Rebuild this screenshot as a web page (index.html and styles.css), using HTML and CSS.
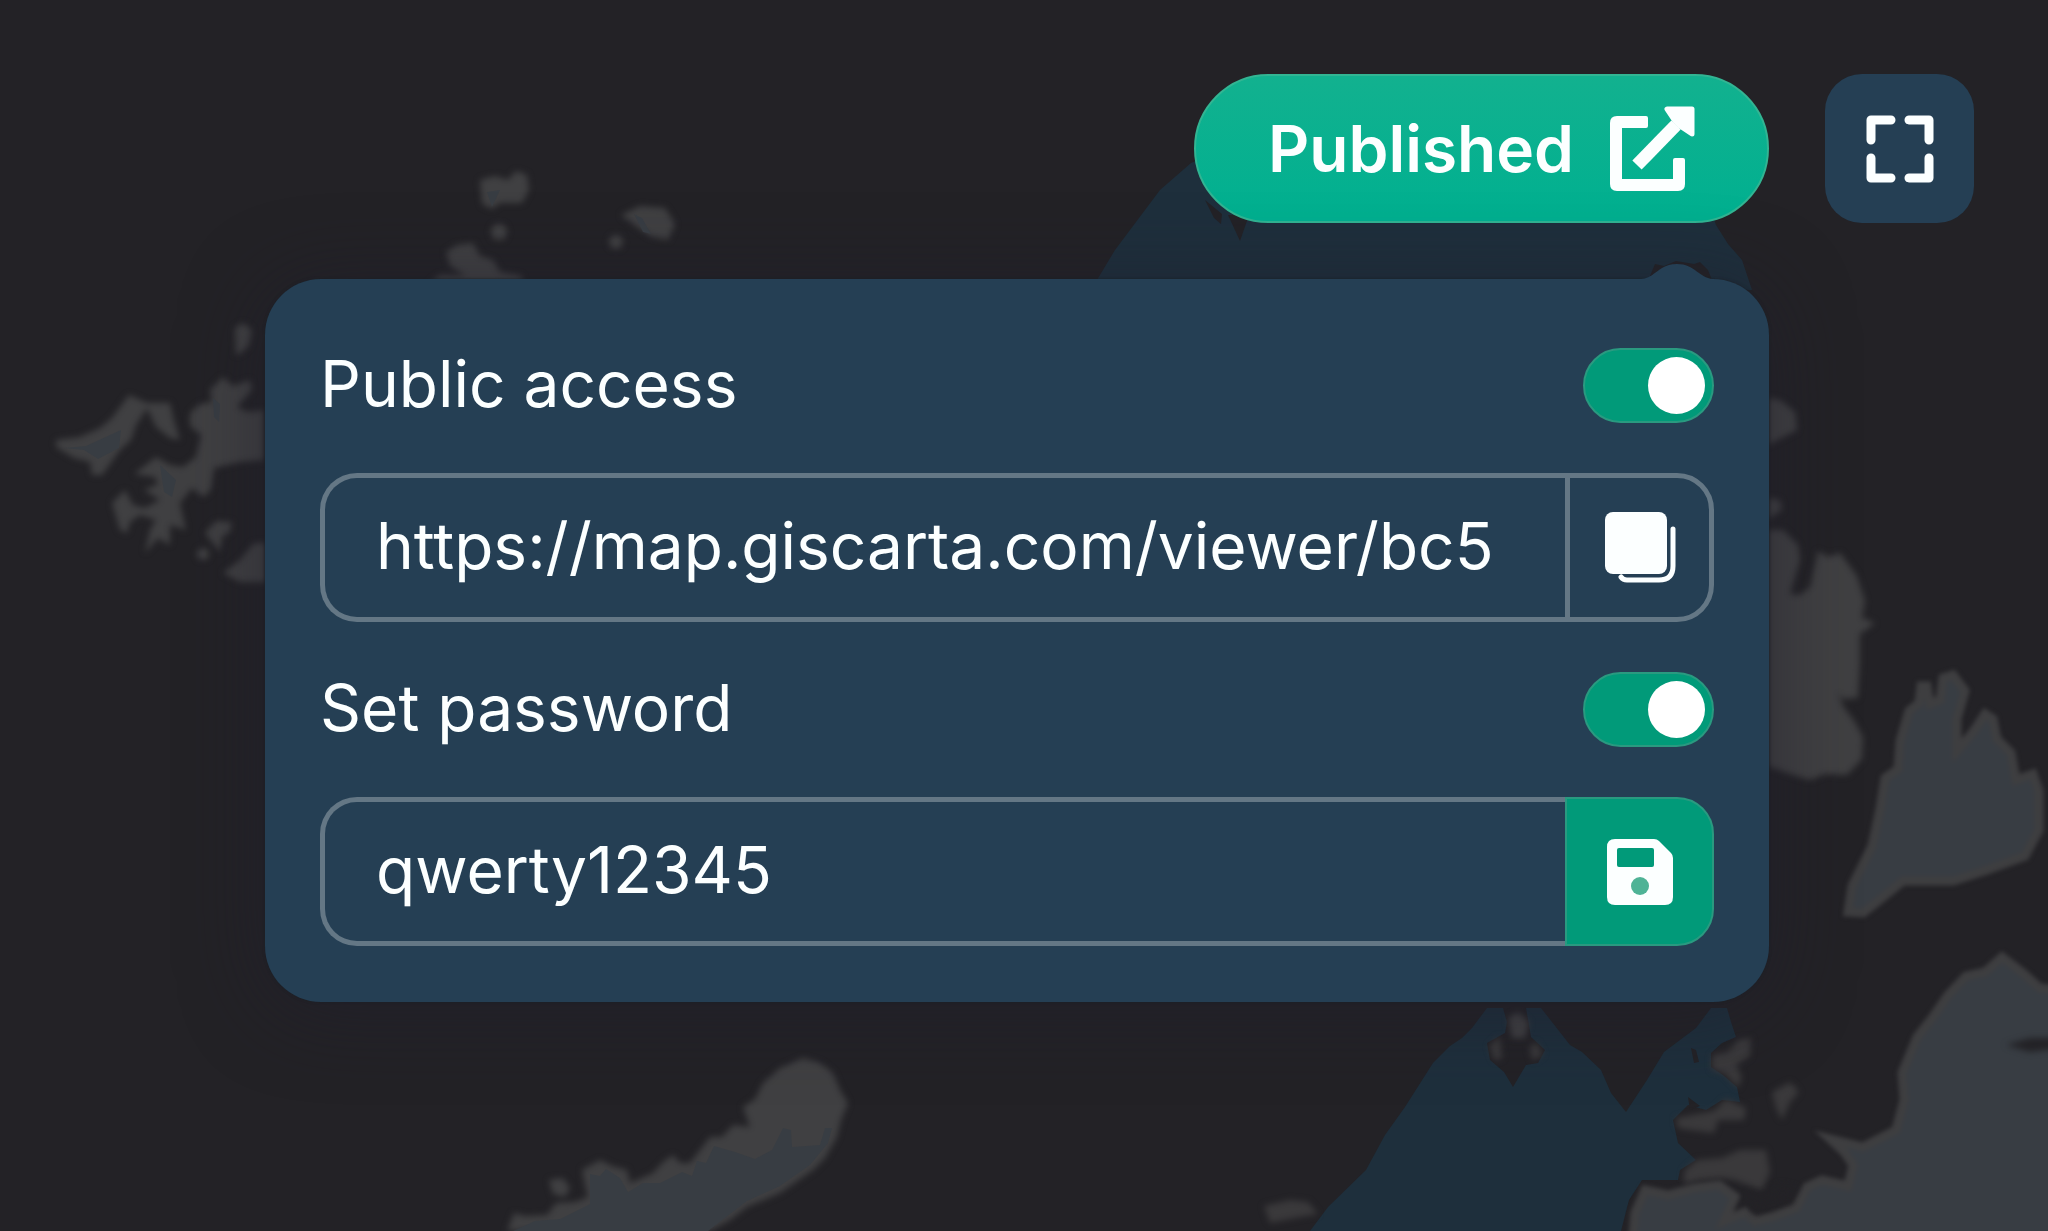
FILE: index.html
```html
<!DOCTYPE html>
<html lang="en">
<head>
  <meta charset="UTF-8">
  <meta name="viewport" content="width=device-width, initial-scale=1.0">
  <title>Map sharing</title>
  <link rel="stylesheet" href="styles.css">
</head>
<body>
  <svg class="map" viewBox="0 0 2048 1231" preserveAspectRatio="xMidYMid slice" aria-hidden="true">
    <!-- water -->
    <g class="water">
      <path d="M1097 280L1115 250L1136 222L1160 190L1191 163L1220 150H1690L1716 225L1728 244L1742 260L1752 290Z"/>
      <path d="M1310 1231L1328 1207L1366 1170L1385 1135L1405 1107L1433 1063L1450 1046L1462 1038L1472 1028L1487 1008H1503L1507 1022L1505 1033L1487 1043L1490 1060L1504 1072L1513 1087L1526 1065L1538 1063L1545 1050L1531 1037L1526 1008H1541L1570 1045L1582 1052L1601 1070L1611 1093L1626 1112L1647 1080L1664 1052L1680 1040L1696 1028L1711 1008H1727L1731 1022L1736 1037L1722 1043L1711 1053V1067L1723 1075L1737 1087L1740 1102L1722 1100L1706 1110L1688 1105L1673 1120L1678 1143L1696 1160L1680 1170L1678 1180H1642L1629 1200L1621 1231Z"/>
    </g>
    <path class="dark" d="M1228 215H1249L1240 241Z M1205 200L1222 214L1221 224L1214 218Z M1688 1097L1700 1106L1690 1110Z M1691 1048L1696 1050L1699 1062L1694 1063Z M1650 276L1655 264L1664 266L1676 261L1694 264L1700 262L1708 270L1712 280Z"/>
    <!-- land -->
    <g class="land">
      <path d="M480 180L495 176L508 180L516 171L527 175L529 190L522 203L500 203L492 209L482 204Z"/>
      <path d="M621 215L640 206L665 208L675 224L668 240L650 236L636 226Z"/>
      <circle cx="616" cy="242" r="7"/>
      <circle cx="499" cy="232" r="8"/>
      <path d="M446 252L457 245L473 243L480 256L493 260L500 272L522 276V285H428L440 275L466 276L450 266Z"/>
      <path d="M235 328L243 323L252 330L249 345L241 353L236 355Z"/>
      <path d="M56 440L80 437L100 428L112 418L129 395L147 403L170 403L174 420L180 440L170 438L156 427L147 408L136 425L131 440L120 450L102 475L92 475L90 462L74 458L56 447Z"/>
      <path d="M190 413L200 404L212 402L210 390L223 377L233 386L250 380L252 390L237 407L248 412L264 410V460L240 462L214 468L211 490L203 497L192 488L180 503L186 530L170 525L170 545L158 538L145 553L150 530L156 520L140 515L130 522L127 533L120 530L112 503L125 490L133 505L145 508L160 500L144 490L158 484L155 477L134 474L142 468L156 457L170 465L183 467L196 457L201 435L190 426Z"/>
      <path d="M205 533L216 521L232 522L230 532L222 537L220 552Z"/>
      <circle cx="203" cy="554" r="6"/>
      <path d="M223 573L240 560L254 543H266V582H240Z"/>
      <path d="M1768 398L1780 400L1795 412L1797 430L1783 437L1768 445Z M1768 498L1780 500L1782 510L1768 519Z"/>
      <path d="M1768 530H1783L1798 545L1800 560L1790 594L1800 595L1810 587L1818 551L1828 557L1840 553L1857 576L1865 601L1862 618L1875 623L1860 634L1860 664L1858 698L1843 699L1838 692L1843 706L1855 722L1863 737L1862 759L1847 775L1825 774L1810 780L1790 774L1768 766Z"/>
      <path d="M507 1231L514 1213L525 1216L547 1215L556 1203L575 1202L588 1197L585 1185L582 1170L600 1160L612 1166L627 1170L630 1183L653 1173L663 1162L673 1155L680 1163L690 1163L700 1150L710 1137L722 1137L733 1125L750 1127L743 1107L755 1099L763 1083L780 1068L803 1058L820 1063L833 1073L840 1090L848 1103L841 1120L837 1137L825 1158L813 1170L780 1193L747 1207L730 1220L710 1231Z"/>
      <path d="M549 1180L563 1178L570 1188L565 1197L553 1194Z"/>
      <path d="M1508 1018L1518 1012L1529 1022L1525 1038L1512 1038Z"/>
      <path class="faint" d="M1489 1046L1500 1036L1502 1058L1495 1061Z M1529 1048L1536 1042L1543 1054L1533 1061Z M1712 1055L1728 1052L1738 1040L1751 1038L1750 1056L1736 1065L1742 1077L1738 1088L1724 1073L1712 1070Z M1676 1118L1692 1115L1714 1111L1726 1099L1746 1108L1744 1120L1718 1120L1714 1133L1690 1130L1678 1128Z M1772 1092L1790 1082L1799 1092L1790 1102L1782 1120L1776 1108Z M1684 1171L1697 1160L1722 1158L1740 1150L1766 1150L1770 1172L1762 1190L1745 1184L1735 1180L1722 1178L1700 1180L1684 1184Z M1264 1206L1290 1200L1308 1202L1318 1214L1300 1217L1270 1223Z"/>
    </g>
    <g class="shore">
      <path d="M1848 912L1852 886L1872 846L1880 809L1885 778L1898 769L1900 741L1909 711L1919 703L1921 686L1927 686L1930 704L1940 700L1943 678L1953 675L1965 691L1957 719L1957 751L1973 732L1985 714L1993 719L1997 739L2011 753L2016 780L2033 774L2039 791L2039 830L2025 856L1987 870L1953 881L1903 881L1877 902L1863 913Z"/>
      <path d="M2060 990L2040 988L2023 973L2002 957L1985 972L1966 976L1948 995L1932 1018L1917 1037L1902 1073L1904 1100L1896 1130L1863 1147L1830 1139L1844 1152L1853 1165L1848 1186L1822 1180L1807 1187L1796 1208L1775 1216L1755 1221L1745 1212L1724 1221L1735 1197L1719 1185L1695 1188L1668 1195L1645 1190L1635 1213L1632 1245H2060Z"/>
    </g>
    <path class="shallow" d="M513 1231L535 1221L560 1219L590 1204L590 1174L600 1176L606 1169L620 1178L628 1192L643 1183L660 1183L682 1172L692 1176L697 1161L706 1163L714 1146L735 1152L755 1159L772 1150L783 1128L791 1130L792 1147L820 1145L825 1128H832L828 1143L810 1165L780 1186L747 1201L708 1231Z M65 448L86 446L121 430L119 448L98 459L84 450Z M160 465L176 480L172 497L164 492Z M213 398L220 404L219 422L214 417Z M487 192L500 190L492 207Z M634 214L642 218L651 234L643 232Z"/>
    <path class="dark-soft" d="M2006 1045L2030 1038H2060V1048L2030 1052Z M1748 1192L1762 1196L1780 1184L1797 1188L1788 1202L1770 1198L1752 1214Z"/>
  </svg>

  <main class="page">
    <div class="toolbar">
      <button class="publish" type="button">
        Published
        <svg class="publish-icon" viewBox="0 0 85 85" aria-hidden="true">
          <path d="M36 10Q38 10 38 12V20Q38 22 36 22H12V73H63V54Q63 52 65 52H73Q75 52 75 54V78Q75 85 68 85H7Q0 85 0 78V17Q0 10 7 10Z" fill="currentColor"/>
          <path d="M27 59L66 19" fill="none" stroke="currentColor" stroke-width="13"/>
          <path d="M57 3H82V28L70 20L65 15Z" fill="currentColor" stroke="currentColor" stroke-width="5" stroke-linejoin="round"/>
        </svg>
      </button>
      <button class="fullscreen" type="button" aria-label="Full screen">
        <svg class="fullscreen-icon" viewBox="0 0 70 70" aria-hidden="true">
          <path d="M6 26V6H26M44 6H64V26M64 44V64H44M26 64H6V44" fill="none" stroke="currentColor" stroke-width="9" stroke-linejoin="round" stroke-linecap="round"/>
        </svg>
      </button>
    </div>

    <section class="panel">
      <svg class="panel-tip" viewBox="0 0 72 16" aria-hidden="true">
        <path d="M0 16C14 15 18 1 36 1C54 1 58 15 72 16Z" fill="currentColor"/>
      </svg>

      <div class="row">
        <label for="public">Public access</label>
        <input id="public" class="switch" type="checkbox" checked>
      </div>
      <div class="field">
        <input class="text" type="text" aria-label="Public link" value="https://map.giscarta.com/viewer/bc5" readonly>
        <button class="action" type="button" aria-label="Copy link">
          <svg class="action-icon" viewBox="0 0 72 72" aria-hidden="true">
            <rect x="1" y="0" width="62" height="62" rx="8" fill="currentColor"/>
            <path d="M69 17V54Q69 68 55 68H23Q19 68 17 65" fill="none" stroke="currentColor" stroke-width="5" stroke-linecap="round"/>
          </svg>
        </button>
      </div>

      <div class="row">
        <label for="protect">Set password</label>
        <input id="protect" class="switch" type="checkbox" checked>
      </div>
      <div class="field">
        <input class="text" type="text" aria-label="Password" value="qwerty12345">
        <button class="action action-save" type="button" aria-label="Save password">
          <svg class="action-icon" viewBox="0 0 72 72" aria-hidden="true">
            <path d="M11 3H50Q53 3 55 5L67 17Q69 19 69 22V61Q69 69 61 69H11Q3 69 3 61V11Q3 3 11 3Z" fill="currentColor"/>
            <rect class="slot" x="13" y="12" width="37" height="19" rx="2"/>
            <circle class="hub" cx="36" cy="50" r="9"/>
          </svg>
        </button>
      </div>
    </section>
  </main>
</body>
</html>
```

FILE: styles.css
```css
* {
  box-sizing: border-box;
}
body {
  margin: 0;
  min-height: 100vh;
  background: #232226;
  color: #fcffff;
  font-family: Inter, "Noto Sans", sans-serif;
  font-size: 64px;
}
button,
input {
  margin: 0;
  font: inherit;
  color: inherit;
}
button {
  display: flex;
  align-items: center;
  justify-content: center;
  padding: 0;
  border: none;
  cursor: pointer;
}

/* map behind the controls */
.map {
  position: fixed;
  inset: 0;
  width: 100%;
  height: 100%;
}
.water {
  fill: #1e2f3c;
}
.dark,
.dark-soft {
  fill: #232226;
}
.dark-soft {
  filter: blur(3px);
}
.land {
  fill: #404042;
  filter: blur(3px);
}
.faint {
  fill: #3a393b;
}
.shore {
  fill: #383d43;
  stroke: #3e3e40;
  stroke-width: 9px;
  filter: blur(2px);
}
.shallow {
  fill: #383d43;
}

.page {
  position: relative;
  padding: 74px;
}
.toolbar {
  display: flex;
  justify-content: flex-end;
  gap: 56px;
}
.publish {
  gap: 36px;
  height: 149px;
  padding: 0 72px;
  border: 2px solid #32b593;
  border-radius: 75px;
  background: linear-gradient(#12b18f, #00b090);
  font-weight: 600;
}
.publish-icon {
  width: 85px;
  height: 85px;
}
.fullscreen {
  width: 149px;
  height: 149px;
  border-radius: 37px;
  background: #253f54;
}
.fullscreen-icon {
  width: 70px;
  height: 70px;
}

.panel {
  position: relative;
  display: flex;
  flex-direction: column;
  gap: 50px;
  margin: 56px 205px 0 191px;
  padding: 69px 55px 56px;
  border-radius: 56px;
  background: #253f54;
  box-shadow: 0 0 3px #1c2026, 0 8px 80px rgba(32, 30, 44, 0.6);
}
.panel-tip {
  position: absolute;
  right: 56px;
  bottom: 100%;
  width: 72px;
  height: 16px;
  color: #253f54;
}
.row {
  display: flex;
  align-items: center;
  justify-content: space-between;
  height: 75px;
}
label {
  padding-bottom: 4px;
}

.switch {
  appearance: none;
  width: 131px;
  height: 75px;
  padding: 7px;
  border: 2px solid #2a9a80;
  border-radius: 38px;
  background: #019a79;
  cursor: pointer;
}
.switch::before {
  content: "";
  display: block;
  width: 57px;
  height: 57px;
  border-radius: 50%;
  background: #fff;
}
.switch:checked::before {
  margin-left: auto;
}

.field {
  display: flex;
  height: 149px;
}
.text {
  flex: 1;
  min-width: 0;
  padding: 0 0 4px 51px;
  border: 5px solid #647785;
  border-right: none;
  border-radius: 37px 0 0 37px;
  background: transparent;
  outline: none;
}
.action {
  width: 149px;
  border: 5px solid #647785;
  border-radius: 0 37px 37px 0;
  background: transparent;
}
.action-save {
  border: 2px solid #2a9a80;
  background: #019a79;
}
.action-icon {
  width: 72px;
  height: 72px;
}
.slot {
  fill: #019a79;
}
.hub {
  fill: #4fb396;
}
```
